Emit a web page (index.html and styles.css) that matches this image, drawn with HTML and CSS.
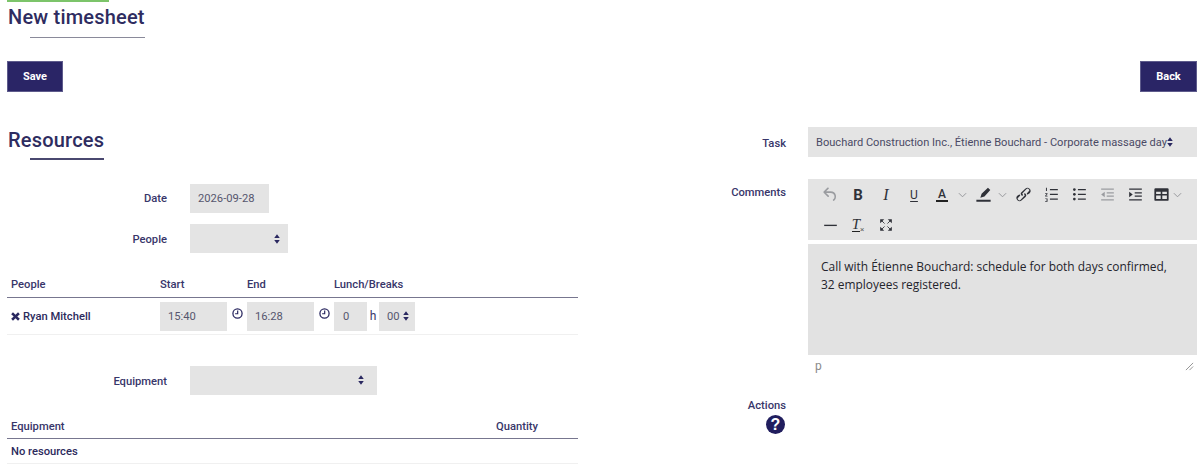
FILE: index.html
```html
<!DOCTYPE html>
<html lang="en">
<head>
<meta charset="utf-8">
<title>New timesheet</title>
<link rel="stylesheet" href="styles.css">
</head>
<body>
<svg class="defs" width="0" height="0" aria-hidden="true">
  <symbol id="sort" viewBox="0 0 10 16"><path d="M5 0l4.600 6.400H.4zM5 16L.4 9.600h9.200z"/></symbol>
  <symbol id="clock" viewBox="0 0 12 12"><circle cx="6" cy="6" r="5" fill="none" stroke="currentColor" stroke-width="1.400"/><path d="M6.200 2.800v3.500H3.400" fill="none" stroke="currentColor" stroke-width="1.300"/></symbol>
  <symbol id="chev" viewBox="0 0 10 6"><path d="M1 1l4 4 4-4" fill="none" stroke="currentColor" stroke-width="1"/></symbol>
</svg>
<div class="accent"></div>
<h1 class="title">New timesheet</h1>
<div class="actions">
  <button class="btn">Save</button>
  <button class="btn">Back</button>
</div>
<div class="columns">
  <section class="left">
    <h2 class="title sub">Resources</h2>
    <div class="form-row first">
      <label class="lbl">Date</label>
      <div class="field w-date">2026-09-28</div>
    </div>
    <div class="form-row">
      <label class="lbl">People</label>
      <div class="field select w-people"><svg class="sort end"><use href="#sort"/></svg></div>
    </div>
    <table class="grid people">
      <thead><tr><th class="c1">People</th><th class="c2">Start</th><th class="c3">End</th><th>Lunch/Breaks</th></tr></thead>
      <tbody>
        <tr>
          <td class="name"><svg class="x" viewBox="0 0 10 10"><path d="M2.200.4L5 3 7.800.4 9.800 2.400 7 5l2.800 2.600-2 2L5 7 2.200 9.600l-2-2L3 5 .2 2.400z"/></svg>Ryan Mitchell</td>
          <td><div class="cell-flex"><div class="field w-time">15:40</div><svg class="clock"><use href="#clock"/></svg></div></td>
          <td><div class="cell-flex"><div class="field w-time">16:28</div><svg class="clock"><use href="#clock"/></svg></div></td>
          <td><div class="cell-flex"><div class="field w-hour">0</div><span class="h">h</span><div class="field select w-min">00<svg class="sort"><use href="#sort"/></svg></div></div></td>
        </tr>
      </tbody>
    </table>
    <div class="form-row equip">
      <label class="lbl">Equipment</label>
      <div class="field select w-equip"><svg class="sort end"><use href="#sort"/></svg></div>
    </div>
    <table class="grid equipment">
      <thead><tr><th>Equipment</th><th class="qty">Quantity</th></tr></thead>
      <tbody><tr><td colspan="2" class="name none">No resources</td></tr></tbody>
    </table>
  </section>
  <section class="right">
    <label class="lbl r-task">Task</label>
    <div class="field select task">Bouchard Construction Inc., Étienne Bouchard - Corporate massage day<svg class="sort"><use href="#sort"/></svg></div>
    <label class="lbl r-comments">Comments</label>
    <div class="editor">
      <div class="toolbar">
        <div class="tb-row">
          <span class="tool off"><svg class="ic" viewBox="0 0 24 24"><path d="M6.400 8H12c3.700 0 6.200 2 6.800 5.100.6 2.700-.4 5.600-2.300 6.800a1 1 0 0 1-1-1.800c1.100-.6 1.800-2.700 1.400-4.600-.5-2.100-2.100-3.500-4.900-3.500H6.400l3.300 3.300a1 1 0 1 1-1.400 1.400l-5-5a1 1 0 0 1 0-1.400l5-5a1 1 0 0 1 1.400 1.400L6.400 8z"/></svg></span>
          <span class="tool g-b">B</span>
          <span class="tool g-i">I</span>
          <span class="tool g-u">U</span>
          <span class="tool"><span class="g-a">A</span></span><svg class="chev c-a"><use href="#chev"/></svg>
          <span class="tool pen"><svg class="ic" viewBox="0 0 24 24"><path d="M17.600 3.400l3 3-7.400 8.200-5.200 1.600 1.600-5zM3 18.600h18V21H3z"/></svg></span><svg class="chev c-p"><use href="#chev"/></svg>
          <span class="tool"><svg class="ic" viewBox="0 0 24 24"><path d="M6.200 12.300a1 1 0 0 1 1.400 1.400l-2 2a2 2 0 1 0 2.800 2.800l4.800-4.800a1 1 0 0 0 0-1.400 1 1 0 1 1 1.400-1.300 2.900 2.900 0 0 1 0 4l-4.800 4.400a4 4 0 0 1-5.600-5.700l2-1.400zm11.600-.6a1 1 0 0 1-1.400-1.400l2-2a2 2 0 1 0-2.800-2.800l-4.800 4.800a1 1 0 0 0 0 1.400 1 1 0 1 1-1.400 1.300 2.900 2.900 0 0 1 0-4l4.800-4.400a4 4 0 0 1 5.600 5.700l-2 1.400z"/></svg></span>
          <span class="tool"><svg class="ic" viewBox="0 0 24 24"><path d="M10 5h10v1.600H10zM10 11h10v1.600H10zM10 17h10v1.600H10zM5 3.500h1.200v4H5zM4 10.500h3v1l-1.800 2H7v1H4v-1l1.800-2H4zM4 17h3v4H4v-.8h2v-.8H5v-.8h1v-.8H4z"/></svg></span>
          <span class="tool"><svg class="ic" viewBox="0 0 24 24"><path d="M10 5h10v1.600H10zM10 11h10v1.600H10zM10 17h10v1.600H10z"/><circle cx="5.500" cy="5.800" r="1.700"/><circle cx="5.500" cy="11.800" r="1.700"/><circle cx="5.500" cy="17.800" r="1.700"/></svg></span>
          <span class="tool off"><svg class="ic" viewBox="0 0 24 24"><path d="M4 4.500h16v1.600H4zM11 9h9v1.600h-9zM11 13.300h9v1.600h-9zM4 18h16v1.600H4zM8.500 8.500v7L4 12z"/></svg></span>
          <span class="tool"><svg class="ic" viewBox="0 0 24 24"><path d="M4 4.500h16v1.600H4zM11 9h9v1.600h-9zM11 13.300h9v1.600h-9zM4 18h16v1.600H4zM4 8.500v7L8.500 12z"/></svg></span>
          <span class="tool tbl"><svg class="ic" viewBox="0 0 24 24"><path fill-rule="evenodd" d="M4.500 4h15A1.500 1.500 0 0 1 21 5.500v13a1.500 1.500 0 0 1-1.500 1.500h-15A1.500 1.500 0 0 1 3 18.500v-13A1.500 1.500 0 0 1 4.500 4zM5.200 8.500v3h5.800v-3zM13 8.500v3h5.800v-3zM5.200 13.300v4.500h5.800v-4.500zM13 13.300v4.500h5.800v-4.500z"/></svg></span><svg class="chev c-t"><use href="#chev"/></svg>
        </div>
        <div class="tb-row">
          <span class="tool"><svg class="ic" viewBox="0 0 24 24"><path d="M4 11h16v1.700H4z"/></svg></span>
          <span class="tool g-t"><span class="t">T</span><span class="tx">×</span></span>
          <span class="tool"><svg class="ic small" viewBox="0 0 24 24"><path d="M2 2h7L2 9zM22 2h-7l7 7zM2 22h7l-7-7zM22 22h-7l7-7z"/><path d="M4 4l5.500 5.500M20 4l-5.500 5.500M4 20l5.500-5.500M20 20l-5.500-5.500" stroke="currentColor" stroke-width="1.500"/></svg></span>
        </div>
      </div>
      <div class="editor-body">Call with Étienne Bouchard: schedule for both days confirmed,<br>32 employees registered.</div>
      <div class="status"><span>p</span><svg class="grip" viewBox="0 0 10 10"><path d="M9 1L1 9M9 5L5 9" stroke="#8a8a8a" stroke-width="1" fill="none"/></svg></div>
    </div>
    <div class="r-actions">
      <label class="lbl">Actions</label>
      <span class="help">?</span>
    </div>
  </section>
</div>
</body>
</html>
```
FILE: styles.css
```css
* { box-sizing: border-box; }
html, body { margin: 0; height: 476px; overflow: hidden; }
body {
  padding: 0 3px 0 7px;
  background: #fff;
  font-family: Roboto, "Liberation Sans", sans-serif;
  font-size: 11.2px;
  color: #2c2a5c;
}
.defs { position: absolute; }
.accent { width: 102px; height: 2px; background: #7cc46a; }
.title {
  margin: 0;
  padding-left: 1px;
  font-size: 20px;
  font-weight: 500;
  letter-spacing: .2px;
  line-height: 30px;
  color: #2e2c60;
  width: 138px;
  height: 36px;
}
.title::after {
  content: "";
  display: block;
  height: 1px;
  margin: 5px 0 0 22px;
  background: #8a8a9a;
}
.sub { width: 97px; height: 33px; line-height: 26px; }
.sub::after { background: #4a4870; height: 2px; }
.actions { display: flex; justify-content: space-between; margin-top: 23px; }
.btn {
  height: 31px;
  width: 56px;
  border: 1px solid #5e5b8c;
  border-radius: 0;
  background: #2a2566;
  color: #fff;
  font: 700 11px Roboto, sans-serif;
  padding: 0;
}
.actions .btn:last-child { width: 57px; }
.columns { display: flex; margin-top: 35px; }
.left { width: 571px; flex: none; }
.lbl { font-weight: 500; font-size: 11.2px; color: #38366a; }
.form-row { display: flex; align-items: center; height: 29px; margin-top: 11px; }
.form-row.first { margin-top: 24px; }
.form-row .lbl { width: 160px; text-align: right; margin-right: 23px; padding-top: 2px; }
.form-row.first .lbl { padding-top: 0; }
.field {
  background: #e4e4e4;
  height: 29px;
  display: flex;
  align-items: center;
  font-size: 11.2px;
  color: #56566e;
  padding-left: 8px;
  white-space: nowrap;
}
.select { justify-content: space-between; padding-right: 8px; }
.sort { width: 6px; height: 10px; fill: #2a2860; flex: none; }
.sort.end { margin-left: auto; }
.w-date { width: 79px; }
.w-people { width: 98px; }
.w-equip { width: 187px; padding-right: 13px; }
.equip { margin-top: 31px; }
.grid { width: 571px; border-collapse: collapse; table-layout: fixed; }
.grid th {
  text-align: left;
  font-weight: 500;
  font-size: 11.2px;
  color: #38366a;
  height: 27px;
  padding: 2px 0 0;
  vertical-align: middle;
  border-bottom: 1px solid #77768f;
}
.grid td { padding: 4px 0 3px; border-bottom: 1px solid #f0f0f0; height: 37px; }
.people { margin-top: 17px; }
.c1 { width: 153px; }
.c2, .c3 { width: 87px; }
.grid th:first-child, .grid td.name { padding-left: 4px; }
td.name { font-weight: 500; color: #2c2a5c; }
.x { width: 9px; height: 9px; fill: #2a2860; margin-right: 3px; vertical-align: -1px; }
.cell-flex { display: flex; align-items: center; }
.w-time { width: 67px; padding-left: 8px; }
.clock { width: 11px; height: 11px; color: #2a2860; margin: -5px 0 0 5px; }
.w-hour { width: 33px; padding-left: 9px; }
.h { width: 12px; text-align: center; font-size: 12px; color: #38366a; }
.w-min { width: 36px; padding-left: 8px; padding-right: 6px; }
.equipment { margin-top: 17px; }
.grid.equipment th { padding-top: 4px; }
.equipment .qty { width: 82px; }
.equipment td { height: 25px; padding: 0 0 0 4px; }
.right {
  flex: 1;
  display: grid;
  grid-template-columns: 208px 389px;
  grid-template-rows: 30px auto auto;
  column-gap: 22px;
  row-gap: 22px;
}
.right .lbl { text-align: right; }
.r-task { align-self: center; padding-top: 2px; }
.task { height: 30px; justify-content: flex-start; color: #4a4a64; font-size: 11.08px; }
.task .sort { margin-left: 0; }
.r-comments { padding-top: 7px; }
.editor { display: flex; flex-direction: column; }
.toolbar { background: #e4e4e4; height: 61px; padding: 1px 0 0 8px; }
.tb-row { display: flex; align-items: center; height: 29px; color: #2f3138; }
.tb-row + .tb-row { height: 28px; margin-top: 2px; }
.tool {
  width: 28px;
  height: 24px;
  display: flex;
  align-items: center;
  justify-content: center;
  flex: none;
}
.tool.pen { width: 26px; }
.tool.tbl { width: 24px; }
.ic { width: 19px; height: 19px; fill: currentColor; }
.ic.small { width: 14px; height: 14px; }
.off { color: #9a9ca0; }
.g-b { font: 700 15px Roboto, sans-serif; }
.g-i { font: italic 400 16px "Liberation Serif", serif; }
.g-u { font: 400 12px Roboto, sans-serif; text-decoration: underline; text-underline-offset: 2px; }
.g-a { font: 500 12px Roboto, sans-serif; border-bottom: 2px solid #222; line-height: 12px; padding: 0 2px; }
.g-t { font: italic 400 15px "Liberation Serif", serif; }
.t { border-bottom: 1px solid #222; line-height: 13px; }
.tx { font: 400 8px Roboto, sans-serif; margin-top: 8px; color: #666; }
.chev { width: 9px; height: 6px; color: #8f9195; flex: none; }
.c-a { margin: 0 3px 0 2px; }
.c-p { margin: 0 2px; }
.editor-body {
  margin-top: 4px;
  height: 111px;
  background: #e2e2e2;
  padding: 14px 13px;
  font: 400 11.95px/18px "Open Sans", sans-serif;
  color: #24242c;
}
.status {
  height: 22px;
  display: flex;
  align-items: center;
  justify-content: space-between;
  padding: 0 3px 0 7px;
  color: #8a8a8a;
  font-size: 12px;
}
.grip { width: 9px; height: 9px; }
.r-actions {
  grid-column: 1;
  display: flex;
  flex-direction: column;
  align-items: flex-end;
  margin-top: -30px;
}
.help {
  width: 19px;
  height: 19px;
  border-radius: 50%;
  background: #211e5e;
  color: #fff;
  font: 700 16px/19px "Liberation Sans", sans-serif;
  text-align: center;
  margin: 3px 1px 0 0;
}
```
